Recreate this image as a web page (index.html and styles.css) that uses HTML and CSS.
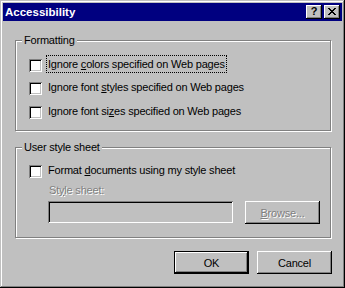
FILE: index.html
```html
<!DOCTYPE html>
<html>
  <head>
    <title>Accessibility</title>
    <meta name="viewport" content="width=device-width, initial-scale=1" />
    <link rel="stylesheet" href="styles.css">
  </head>
  <body>
    <div class="window">
      <div class="titlebar">
        <span class="title">Accessibility</span>
        <button class="caption-btn help">?</button>
        <button class="caption-btn close">
          <svg width="8" height="7" viewBox="0 0 8 7" shape-rendering="crispEdges">
            <path d="M0 0h2v1h-2zM6 0h2v1h-2zM1 1h2v1h-2zM5 1h2v1h-2zM2 2h4v1h-4zM3 3h2v1h-2zM2 4h4v1h-4zM1 5h2v1h-2zM5 5h2v1h-2zM0 6h2v1h-2zM6 6h2v1h-2z" fill="#000"/>
          </svg>
        </button>
      </div>
      <div class="dialog">
        <div class="group">
          <div class="legend">Formatting</div>
          <label class="check-row row-1">
            <span class="checkbox"></span>
            <span class="check-label focused">Ignore <u>c</u>olors specified on Web pages</span>
          </label>
          <label class="check-row row-2">
            <span class="checkbox"></span>
            <span class="check-label">Ignore font <u>s</u>tyles specified on Web pages</span>
          </label>
          <label class="check-row row-3">
            <span class="checkbox"></span>
            <span class="check-label">Ignore font si<u>z</u>es specified on Web pages</span>
          </label>
        </div>
        <div class="group user-sheet">
          <div class="legend">User style sheet</div>
          <label class="check-row row-4">
            <span class="checkbox"></span>
            <span class="check-label">Format <u>d</u>ocuments using my style sheet</span>
          </label>
          <div class="field-label disabled">St<u>y</u>le sheet:</div>
          <div class="field-row">
            <div class="textbox"></div>
            <button class="btn disabled"><u>B</u>rowse...</button>
          </div>
        </div>
        <div class="actions">
          <button class="btn default">OK</button>
          <button class="btn">Cancel</button>
        </div>
      </div>
    </div>
  </body>
</html>
```

FILE: styles.css
```css
html {
  font-family: "Liberation Sans", Arial, sans-serif;
  font-size: 11px;
}
body {
  margin: 0;
  background-color: #c0c0c0;
}
.window {
  width: 345px;
  height: 288px;
  box-sizing: border-box;
  padding: 3px;
  background-color: #c0c0c0;
  box-shadow: inset -1px -1px #000, inset 1px 1px #c0c0c0,
    inset -2px -2px #808080, inset 2px 2px #fff;
}
.titlebar {
  height: 18px;
  display: flex;
  align-items: flex-start;
  padding: 0 2px;
  background-color: #000080;
  color: white;
}
.title {
  flex: 1;
  padding-top: 1px;
  font-size: 11.5px;
  font-weight: bold;
  line-height: 17px;
}
.caption-btn {
  width: 16px;
  height: 14px;
  margin-top: 2px;
  padding: 0;
  border: none;
  display: flex;
  align-items: flex-start;
  justify-content: center;
  background-color: #c0c0c0;
  box-shadow: inset -1px -1px #000, inset 1px 1px #fff,
    inset -2px -2px #808080, inset 2px 2px #c0c0c0;
  font-family: "Liberation Sans", Arial, sans-serif;
}
.help {
  margin-right: 2px;
  font-size: 11px;
  font-weight: bold;
  line-height: 13px;
  color: #000;
}
.close svg {
  margin-top: 3px;
  display: block;
}
.dialog {
  padding: 0 11px 0 12px;
  letter-spacing: -0.2px;
  color: #000;
}
.group {
  height: 91px;
  box-sizing: border-box;
  margin-top: 19px;
  display: flex;
  flex-direction: column;
  align-items: flex-start;
  border: 1px solid #808080;
  box-shadow: inset 1px 1px #fff, 1px 1px #fff;
}
.user-sheet {
  margin-top: 16px;
}
.legend {
  margin: -7px 0 0 6px;
  padding: 0 2px;
  line-height: 13px;
  background-color: #c0c0c0;
}
.check-row {
  display: flex;
  align-items: flex-start;
  margin-left: 13px;
}
.row-1 {
  margin-top: 8px;
}
.row-2 {
  margin-top: 5px;
}
.row-3 {
  margin-top: 6px;
}
.row-4 {
  margin-top: 7px;
}
.checkbox {
  width: 13px;
  height: 13px;
  margin-top: 4px;
  background-color: #fff;
  box-shadow: inset 1px 1px #808080, inset -1px -1px #fff,
    inset 2px 2px #000, inset -2px -2px #c0c0c0;
}
.check-label {
  margin-left: 4px;
  padding: 0 1px;
  border: 1px solid transparent;
  line-height: 16px;
  white-space: nowrap;
}
.focused {
  border: 1px dotted #000;
}
.disabled {
  color: #808080;
  text-shadow: 1px 1px 0 #fff;
}
.field-label {
  margin: 5px 0 0 33px;
  line-height: 13px;
}
.field-row {
  display: flex;
  margin: 4px 0 0 32px;
}
.textbox {
  width: 185px;
  height: 22px;
  background-color: #c0c0c0;
  box-shadow: inset 1px 1px #808080, inset -1px -1px #fff,
    inset 2px 2px #000, inset -2px -2px #c0c0c0;
}
.btn {
  width: 75px;
  height: 23px;
  padding: 0;
  border: none;
  background-color: #c0c0c0;
  font-family: "Liberation Sans", Arial, sans-serif;
  font-size: 11px;
  letter-spacing: -0.2px;
  color: #000;
  box-shadow: inset -1px -1px #000, inset 1px 1px #fff,
    inset -2px -2px #808080, inset 2px 2px #c0c0c0;
}
.field-row .btn {
  margin-left: 12px;
}
.btn.disabled {
  color: #808080;
}
.btn.default {
  box-shadow: inset 0 0 0 1px #000, inset -2px -2px #000,
    inset 2px 2px #fff, inset -3px -3px #808080;
}
.actions {
  display: flex;
  justify-content: flex-end;
  gap: 8px;
  margin: 13px -1px 0 0;
}
```
